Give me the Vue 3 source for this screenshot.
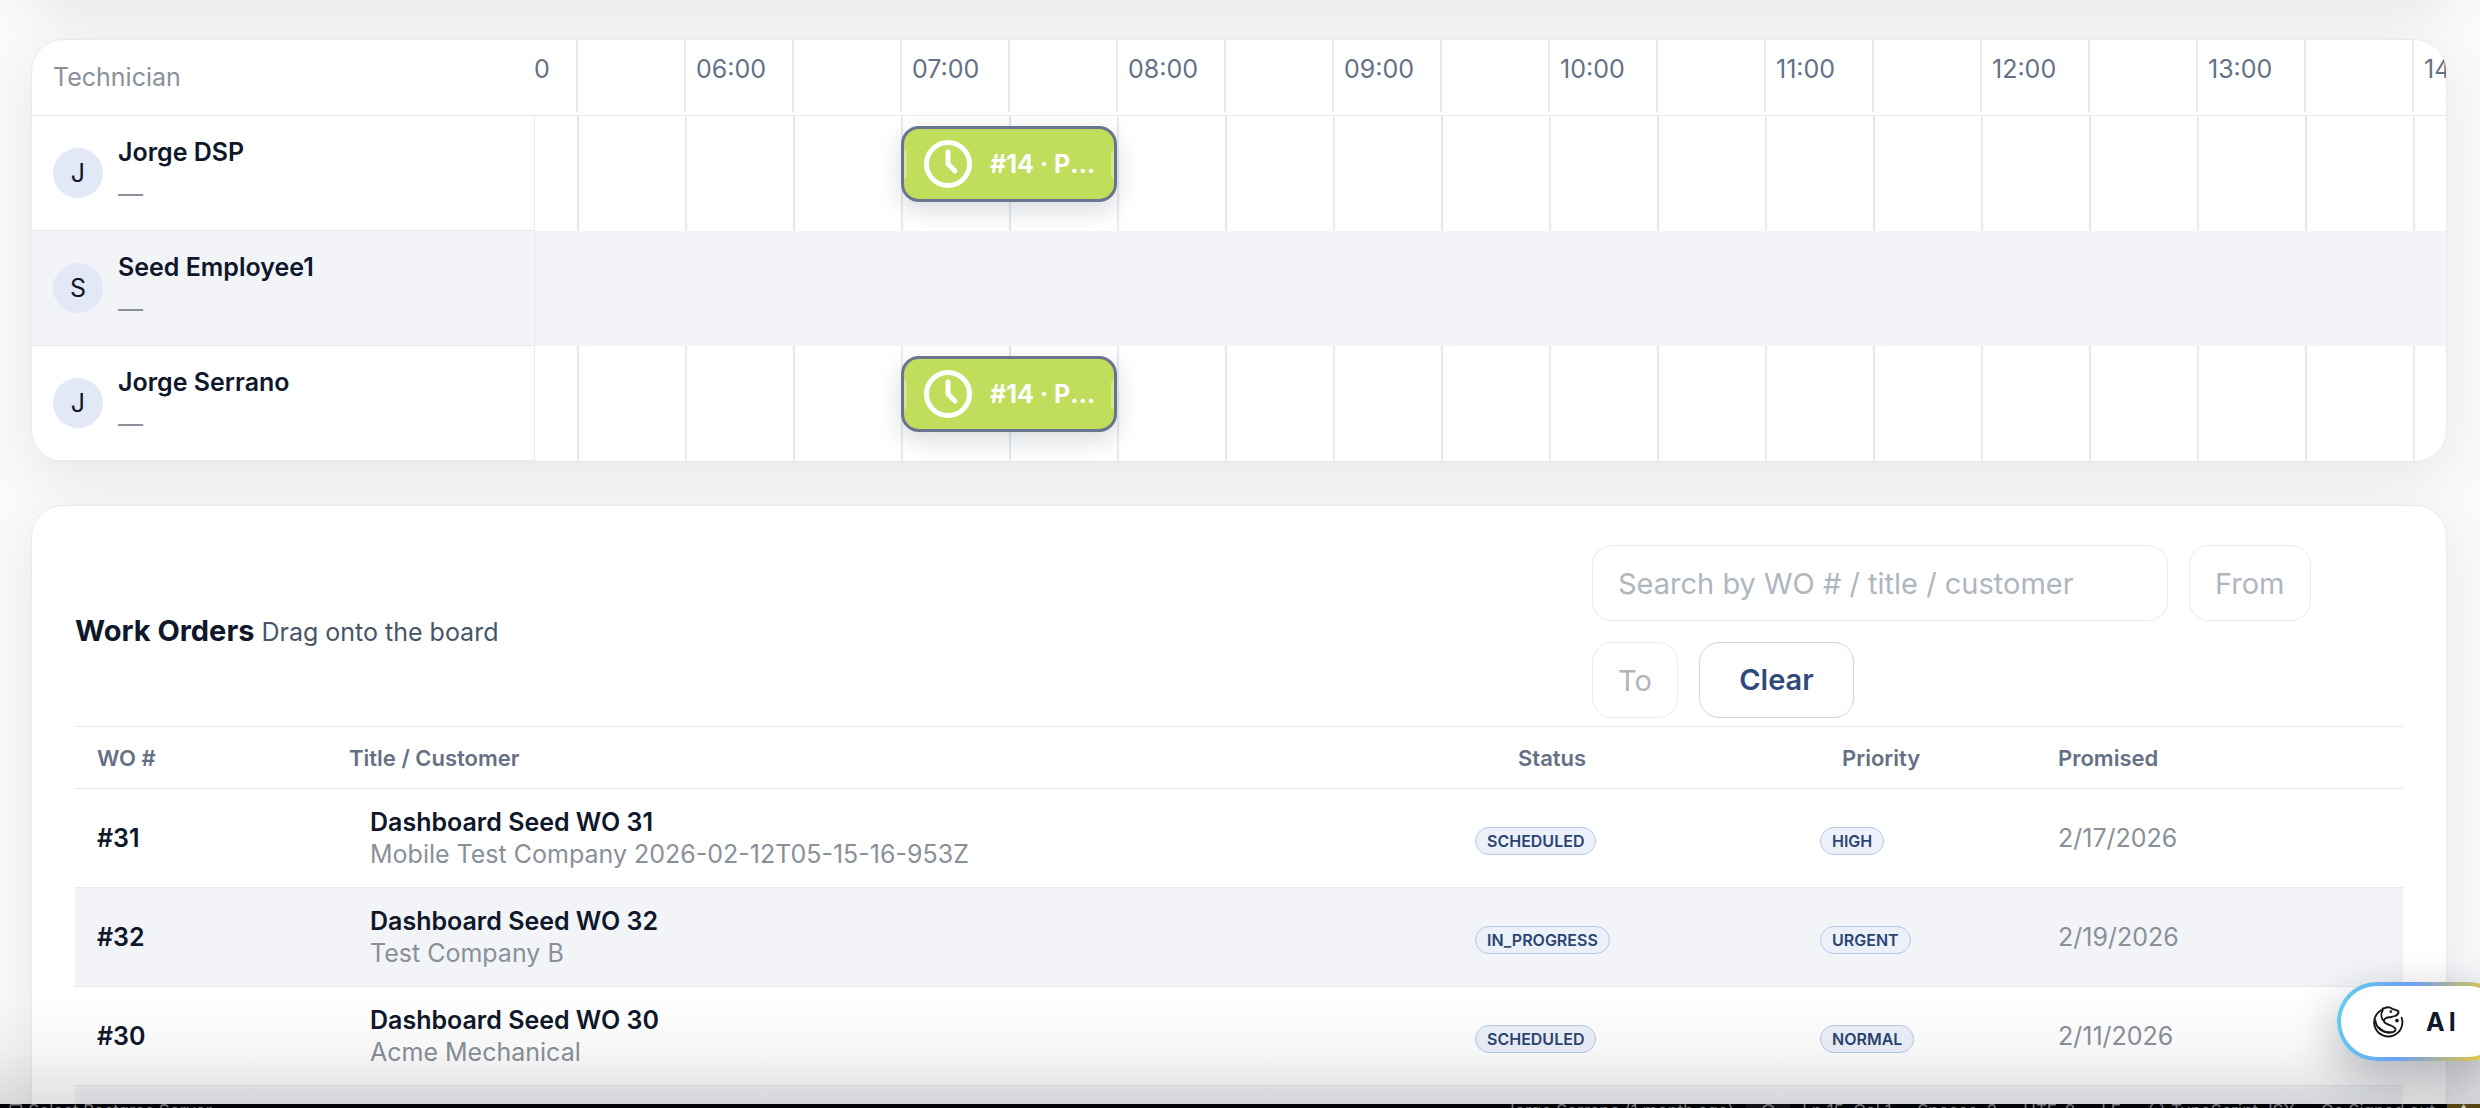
<script setup>
import { ref, computed } from "vue";

const technicians = [
  { name: "Jorge DSP", initial: "J", job: "#14 · Preventive maintenance" },
  { name: "Seed Employee1", initial: "S", job: null },
  { name: "Jorge Serrano", initial: "J", job: "#14 · Preventive maintenance" },
];

const hours = [
  "05:00",
  "06:00",
  "07:00",
  "08:00",
  "09:00",
  "10:00",
  "11:00",
  "12:00",
  "13:00",
  "14:00",
];

const workOrders = [
  {
    number: 31,
    title: "Dashboard Seed WO 31",
    customer: "Mobile Test Company 2026-02-12T05-15-16-953Z",
    status: "SCHEDULED",
    priority: "HIGH",
    promised: "2/17/2026",
  },
  {
    number: 32,
    title: "Dashboard Seed WO 32",
    customer: "Test Company B",
    status: "IN_PROGRESS",
    priority: "URGENT",
    promised: "2/19/2026",
  },
  {
    number: 30,
    title: "Dashboard Seed WO 30",
    customer: "Acme Mechanical",
    status: "SCHEDULED",
    priority: "NORMAL",
    promised: "2/11/2026",
  },
];

const search = ref("");
const from = ref("");
const to = ref("");

const filteredOrders = computed(() => {
  const term = search.value.trim().toLowerCase();
  return workOrders.filter((wo) =>
    `#${wo.number} ${wo.title} ${wo.customer}`.toLowerCase().includes(term)
  );
});

const clearFilters = () => {
  search.value = "";
  from.value = "";
  to.value = "";
};
</script>

<template>
  <div class="page">
    <main class="content">
      <section class="card card-above"></section>

      <section class="card board">
        <div class="board-header">
          <div class="board-corner">Technician</div>
          <div class="track">
            <div class="slots">
              <div v-for="hour in hours" :key="hour" class="slot">
                <span class="slot-label">{{ hour }}</span>
              </div>
            </div>
          </div>
        </div>
        <div v-for="tech in technicians" :key="tech.name" class="board-row">
          <div class="tech">
            <span class="avatar">{{ tech.initial }}</span>
            <div class="tech-text">
              <div class="tech-name">{{ tech.name }}</div>
              <div class="tech-note">—</div>
            </div>
          </div>
          <div class="track">
            <div class="slots">
              <div v-for="hour in hours" :key="hour" class="slot">
                <div v-if="tech.job && hour === '07:00'" class="job">
                  <svg class="job-icon" viewBox="0 0 48 48" aria-hidden="true">
                    <circle cx="24" cy="24" r="21.500" />
                    <path d="M24 12v12l7 7" />
                  </svg>
                  <span class="job-title">{{ tech.job }}</span>
                </div>
              </div>
            </div>
          </div>
        </div>
      </section>

      <section class="card orders">
        <div class="orders-header">
          <div class="orders-heading">
            <h2>Work Orders</h2>
            <span>Drag onto the board</span>
          </div>
          <div class="filters">
            <input
              v-model="search"
              class="field field-search"
              type="text"
              aria-label="Search work orders"
              placeholder="Search by WO # / title / customer"
            />
            <input v-model="from" class="field field-from" type="text" aria-label="From" placeholder="From" />
            <input v-model="to" class="field field-to" type="text" aria-label="To" placeholder="To" />
            <button class="clear" type="button" @click="clearFilters">Clear</button>
          </div>
        </div>

        <table class="orders-table">
          <thead>
            <tr>
              <th class="col-number">WO #</th>
              <th class="col-title">Title / Customer</th>
              <th class="col-status">Status</th>
              <th class="col-priority">Priority</th>
              <th class="col-promised">Promised</th>
            </tr>
          </thead>
          <tbody>
            <tr v-for="wo in filteredOrders" :key="wo.number">
              <td class="number">#{{ wo.number }}</td>
              <td class="inset">
                <div class="order-title">{{ wo.title }}</div>
                <div class="order-customer">{{ wo.customer }}</div>
              </td>
              <td class="inset"><span class="badge">{{ wo.status }}</span></td>
              <td class="inset"><span class="badge">{{ wo.priority }}</span></td>
              <td class="promised">{{ wo.promised }}</td>
            </tr>
            <tr>
              <td colspan="5"></td>
            </tr>
          </tbody>
        </table>
      </section>
    </main>

    <div class="bottom-shade"></div>

    <button class="ai-button" type="button">
      <svg class="ai-icon" viewBox="0 0 34 34" aria-hidden="true">
        <path d="M9.500 4.500A15 15 0 1 0 31.500 12.500" />
        <path d="M11.500 15C9.500 11.500 9.500 7 11.500 4.500C10.500 3.500 11.500 2 13 2.500C16 1 19 1 21.500 3C24 4 26 4 28 5.500C28.500 7.500 27 9.500 25 10.500C22 11 20 12 19 12C15 12 12 14 13 17C14.500 20 25 20.500 25 25C24 29.500 13 29.500 7.500 23" />
        <path d="M3.500 15C4 22.500 11 29 20 28" />
        <circle class="dot" cx="26.500" cy="15.500" r="1" />
        <circle class="dot" cx="20" cy="6" r="0.500" />
      </svg>
      <span>AI</span>
    </button>

    <footer class="status-bar">
      <span class="status-left">▢ Select Postgres Server</span>
      <span>Jorge Serrano (1 month ago)</span>
      <span class="status-zoom">○</span>
      <span>Ln 15, Col 1</span>
      <span>Spaces: 2</span>
      <span>UTF-8</span>
      <span>LF</span>
      <span>{ } TypeScript JSX</span>
      <span>Go Signed out</span>
      <span class="status-warning">▲</span>
    </footer>
  </div>
</template>

<style>
body {
  background: #f9fafc;
}
</style>

<style scoped>
.page {
  position: relative;
  display: flex;
  flex-direction: column;
  height: 100vh;
  overflow: hidden;
  font-family: Inter, "Liberation Sans", sans-serif;
  font-size: 25px;
  line-height: 32px;
  color: #0f172a;
}

.page * {
  box-sizing: border-box;
}

.content {
  flex: 1;
  min-height: 0;
  padding: 0 33px 0 31px;
  overflow: hidden;
}

.card {
  border: 1px solid #e8eaee;
  border-radius: 32px;
  background: white;
  box-shadow: 0 16px 56px rgba(0, 0, 0, 0.08);
}

/* only the shadow of this one reaches into view */
.card-above {
  height: 200px;
  margin-top: -200px;
}

.board {
  margin-top: 39px;
  overflow: hidden;
}

.board-header {
  display: flex;
  height: 76px;
  border-bottom: 1px solid #e8eaee;
}

.board-corner {
  flex: none;
  width: 502px;
  padding: 21px;
  color: #8a9099;
}

.track {
  flex: 1;
  min-width: 0;
  overflow: hidden;
}

.slots {
  display: flex;
  height: 100%;
  margin-left: -66px;
}

.board-header .slots {
  height: 72px;
}

.slot {
  position: relative;
  flex: none;
  width: 216px;
  border-left: 2px solid #e8eaf0;
  background: linear-gradient(#e2e7f5, #e2e7f5) 106px 0 / 2px 100% no-repeat;
}

.slot-label {
  display: block;
  padding: 13px 10px;
  color: #667085;
}

.board-row {
  display: flex;
  height: 115px;
}

.board-row:nth-child(odd) {
  background: #f2f4f8;
}

.board-row:nth-child(odd) .slot {
  border-color: transparent;
  background: none;
}

.tech {
  display: flex;
  flex: none;
  align-items: center;
  gap: 15px;
  width: 503px;
  padding: 0 21px;
  border-right: 1px solid #e8eaee;
  border-bottom: 1px solid #e8eaee;
}

.avatar {
  display: flex;
  align-items: center;
  justify-content: center;
  width: 50px;
  height: 50px;
  border-radius: 50%;
  background: #e2e8f5;
}

.tech-text {
  line-height: 42px;
}

.tech-name {
  font-weight: 600;
}

.tech-note {
  color: #8a9099;
}

.job {
  position: absolute;
  z-index: 1;
  top: 10px;
  left: -2px;
  display: flex;
  align-items: center;
  gap: 18px;
  width: 216px;
  height: 76px;
  padding: 0 12px 0 20px;
  border: 3px solid #69758f;
  border-radius: 18px;
  background: #c0dd5b;
  box-shadow: 0 8px 24px rgba(15, 23, 42, 0.16);
  color: white;
}

.job::before,
.job::after {
  content: "";
  position: absolute;
  top: 21px;
  left: 0;
  width: 3px;
  height: 29px;
  border-radius: 0 3px 3px 0;
  background: rgba(255, 255, 255, 0.3);
}

.job::after {
  right: 0;
  left: auto;
  border-radius: 3px 0 0 3px;
}

.job-icon {
  flex: none;
  width: 48px;
  height: 48px;
  fill: none;
  stroke: white;
  stroke-width: 5;
  stroke-linecap: round;
  stroke-linejoin: round;
}

.job-title {
  overflow: hidden;
  font-weight: 700;
  text-overflow: ellipsis;
  white-space: nowrap;
}

.orders {
  margin-top: 43px;
  padding: 39px 43px;
}

.orders-header {
  display: flex;
  align-items: center;
  justify-content: space-between;
  padding-bottom: 8px;
}

.orders-heading {
  display: flex;
  align-items: baseline;
  gap: 7px;
  color: #475569;
}

.orders-heading h2 {
  margin: 0;
  color: #0f172a;
  font-size: 29px;
  font-weight: 700;
}

.filters {
  display: flex;
  flex-wrap: wrap;
  gap: 21px;
  width: 811px;
}

.field,
.clear {
  height: 76px;
  border: 1px solid #e8eaee;
  border-radius: 20px;
  background: white;
  color: #0f172a;
  font: inherit;
  font-size: 29px;
}

.field {
  padding: 0 25px;
}

.field::placeholder {
  color: #b0b6bf;
  opacity: 1;
}

.field-search {
  width: 576px;
}

.field-from {
  width: 122px;
}

.field-to {
  width: 86px;
}

.clear {
  width: 155px;
  padding: 0;
  border-color: #cfd4de;
  color: #2f4b7c;
  font-weight: 600;
}

.orders-table {
  width: 100%;
  border-collapse: collapse;
  table-layout: fixed;
}

.orders-table th {
  height: 62px;
  padding: 0 22px;
  border-top: 1px solid #e8eaee;
  color: #667085;
  font-size: 22px;
  font-weight: 600;
  text-align: left;
}

.orders-table .col-number {
  width: 252px;
}

.orders-table .col-status {
  width: 345px;
  padding-left: 86px;
}

.orders-table .col-priority {
  width: 259px;
  padding-left: 65px;
}

.orders-table .col-promised {
  width: 367px;
}

.orders-table td {
  height: 99px;
  padding: 0 22px;
  border-top: 1px solid #e8eaee;
}

.orders-table tbody tr:nth-child(even) {
  background: #f2f4f8;
}

.orders-table .inset {
  padding-left: 43px;
}

.number,
.order-title {
  font-weight: 600;
}

.order-customer,
.promised {
  color: #8a9099;
}

.badge {
  display: inline-block;
  height: 28px;
  padding: 0 11px;
  border: 1px solid #b4c8e6;
  border-radius: 14px;
  background: #ecf1f9;
  color: #2a4471;
  font-size: 16px;
  font-weight: 600;
  line-height: 26px;
}

.bottom-shade {
  position: absolute;
  right: 0;
  bottom: 4px;
  left: 0;
  height: 110px;
  background: linear-gradient(rgba(0, 0, 0, 0), rgba(0, 0, 0, 0.03) 50%, rgba(0, 0, 0, 0.12));
  pointer-events: none;
}

.ai-button {
  position: absolute;
  right: -28px;
  bottom: 47px;
  display: flex;
  align-items: center;
  gap: 22px;
  width: 171px;
  height: 79px;
  padding: 0 31px;
  border: 4px solid transparent;
  border-radius: 40px;
  background:
    linear-gradient(white, white) padding-box,
    linear-gradient(100deg, #62d0ea, #6aa0f5 40%, #e3c443 85%) border-box;
  box-shadow: 0 16px 48px rgba(15, 23, 42, 0.3);
  color: #0f172a;
  font: inherit;
  font-weight: 700;
  letter-spacing: 4px;
}

.ai-icon {
  flex: none;
  width: 32px;
  height: 32px;
  fill: none;
  stroke: #15171c;
  stroke-width: 2;
  stroke-linecap: round;
  stroke-linejoin: round;
}

.ai-icon .dot {
  fill: #15171c;
}

.status-bar {
  display: flex;
  flex: none;
  gap: 26px;
  height: 4px;
  overflow: hidden;
  padding-left: 8px;
  background: #030407;
  color: #77797d;
  font-size: 17px;
  line-height: 14px;
  white-space: nowrap;
}

.status-left {
  flex: 1;
}

.status-zoom {
  width: 44px;
  margin: 0 -14px;
  background: #121317;
  text-align: center;
}

.status-warning {
  width: 33px;
  margin-left: -14px;
  background: #5a4713;
  color: #c9c9c9;
  text-align: center;
}
</style>
